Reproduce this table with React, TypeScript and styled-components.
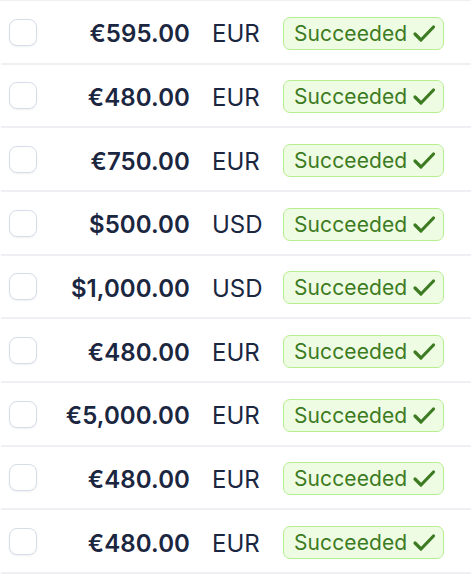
import React from "react";
import styled, { createGlobalStyle } from "styled-components";

const Global = createGlobalStyle`
  html, body { margin: 0; padding: 0; background: #ffffff; }
  body { font-family: Inter, "Noto Sans", "Liberation Sans", sans-serif; -webkit-font-smoothing: antialiased; }
`;

const Table = styled.div`
  width: 471px;
  border-top: 2px solid #eef0f4;
  margin-top: -1px;
`;

const Row = styled.div`
  box-sizing: border-box;
  height: 63.67px;
  padding-top: 4px;
  border-bottom: 2px solid #eef0f4;
  margin-left: 1px;
  display: grid;
  grid-template-columns: 28px 153px 93px auto;
  align-items: center;
  padding-left: 8px;
`;

const Check = styled.div`
  width: 28px;
  height: 27px;
  box-sizing: border-box;
  border: 1.5px solid #d6dde9;
  border-radius: 8px;
  background: #fff;
  box-shadow: 0 1px 2px rgba(60, 80, 120, 0.08);
  margin-top: -3px;
`;

const Amount = styled.div`
  text-align: right;
  font-size: 24px;
  font-weight: 600;
  color: #1b2640;
  letter-spacing: 0.1px;
`;

const Currency = styled.div`
  padding-left: 22px;
  font-size: 24px;
  font-weight: 400;
  color: #1b2640;
`;

const Badge = styled.div`
  display: inline-flex;
  align-items: center;
  gap: 5px;
  height: 33px;
  box-sizing: border-box;
  width: 161px;
  padding: 0 0 0 10px;
  background: #effce4;
  border: 1.5px solid #b6ee90;
  border-radius: 7px;
  color: #3d7b22;
  font-size: 21px;
  font-weight: 400;
  letter-spacing: 0.1px;
  margin-top: -1px;
  white-space: nowrap;

  svg { flex-shrink: 0; }
`;

const rows = [
  ["€595.00", "EUR"],
  ["€480.00", "EUR"],
  ["€750.00", "EUR"],
  ["$500.00", "USD"],
  ["$1,000.00", "USD"],
  ["€480.00", "EUR"],
  ["€5,000.00", "EUR"],
  ["€480.00", "EUR"],
  ["€480.00", "EUR"],
];

const CheckIcon = () => (
  <svg width="24" height="19" viewBox="0 0 24 19" fill="none">
    <path d="M3 10 L9 16 L21.5 3" stroke="#3d7b22" strokeWidth="3.2" strokeLinecap="round" strokeLinejoin="round" />
  </svg>
);

export default function App() {
  return (
    <>
      <Global />
      <Table>
        {rows.map(([amt, cur], i) => (
          <Row key={i}>
            <Check />
            <Amount>{amt}</Amount>
            <Currency>{cur}</Currency>
            <div>
              <Badge>
                Succeeded
                <CheckIcon />
              </Badge>
            </div>
          </Row>
        ))}
      </Table>
    </>
  );
}
